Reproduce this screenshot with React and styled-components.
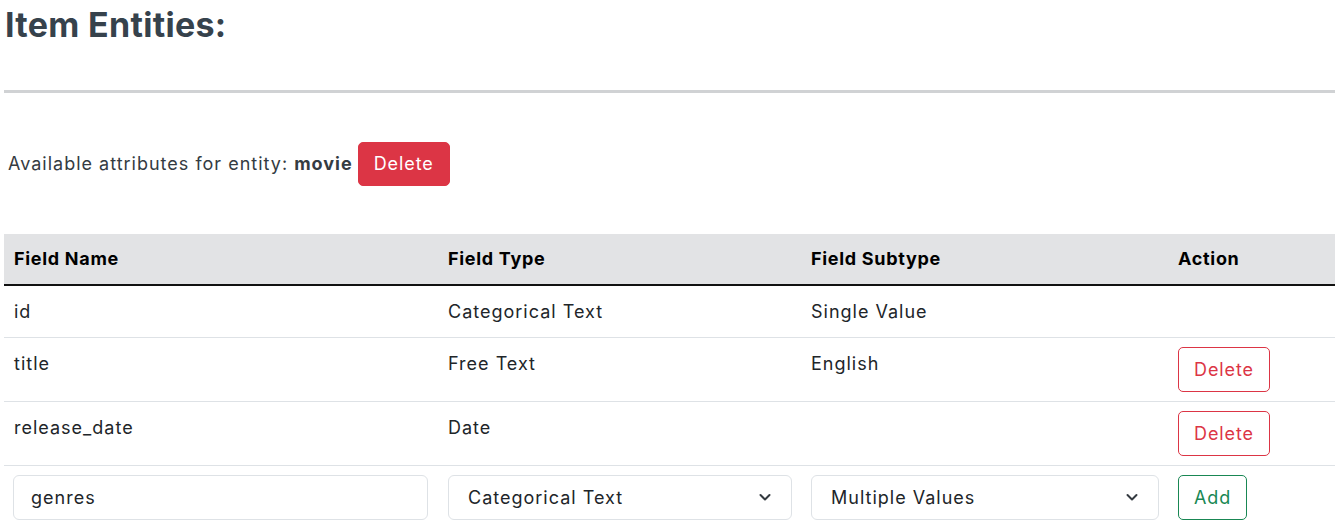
import React from 'react';
import styled, { createGlobalStyle } from 'styled-components';

const GlobalStyle = createGlobalStyle`
  body {
    margin: 0;
    font-family: Inter, "Noto Sans", sans-serif;
    color: #212529;
    background: #fff;
  }
`;

const Page = styled.div`
  padding: 0 5px 0 4px;
`;

const Title = styled.h2`
  margin: 5px 0 0 1px;
  font-size: 34px;
  line-height: 1.2;
  font-weight: 700;
  color: #36424c;
  letter-spacing: 0.3px;
`;

const Divider = styled.hr`
  margin: 44px 0 0;
  border: 0;
  height: 3px;
  background: #d0d2d4;
`;

const AttrLine = styled.div`
  display: flex;
  align-items: center;
  gap: 5px;
  margin-top: 49px;
  padding-left: 4px;
  font-size: 18px;
  letter-spacing: 1px;
  color: #343b42;
`;

const Button = styled.button`
  font-family: inherit;
  font-size: 18px;
  letter-spacing: 0.9px;
  line-height: 27px;
  height: ${(p) => p.$h || 44}px;
  padding: 0 15px;
  border-radius: 5px;
  cursor: pointer;
  border: 1px solid ${(p) => p.$color};
  color: ${(p) => (p.$solid ? '#fff' : p.$color)};
  background: ${(p) => (p.$solid ? p.$color : '#fff')};
`;

const Table = styled.table`
  margin-top: 48px;
  width: 100%;
  border-collapse: collapse;
  font-size: 18px;
  letter-spacing: 1px;
  table-layout: fixed;
`;

const Th = styled.th`
  text-align: left;
  background: #e2e3e5;
  color: #000;
  font-weight: 700;
  letter-spacing: 0.7px;
  line-height: 33px;
  padding: 8px 9px 9px 10px;
  border-bottom: 2px solid #111;
`;

const Td = styled.td`
  vertical-align: top;
  line-height: 33px;
  padding: 9px 9px 9px 10px;
  border-bottom: 1px solid #dee2e6;
`;

const Input = styled.input`
  box-sizing: border-box;
  width: 100%;
  height: 45px;
  font-family: inherit;
  font-size: 18px;
  letter-spacing: 1px;
  color: #212529;
  padding: 0 17px;
  border: 1px solid #dee2e6;
  border-radius: 6px;
  margin-left: -1px;
`;

const SelectBox = styled.div`
  box-sizing: border-box;
  height: 45px;
  display: flex;
  align-items: center;
  justify-content: space-between;
  padding: 0 18px 0 19px;
  border: 1px solid #dee2e6;
  border-radius: 6px;
  color: #212529;
  font-size: 18px;
`;

const Chevron = () => (
  <svg width="16" height="16" viewBox="0 0 16 16" fill="none" stroke="#343a40" strokeWidth="2" strokeLinecap="round" strokeLinejoin="round">
    <path d="m3.5 6 4.5 4.5 4.5-4.5" />
  </svg>
);

const rows = [
  { name: 'id', type: 'Categorical Text', sub: 'Single Value', del: false },
  { name: 'title', type: 'Free Text', sub: 'English', del: true },
  { name: 'release_date', type: 'Date', sub: '', del: true },
];

export default function App() {
  return (
    <Page>
      <GlobalStyle />
      <Title>Item Entities:</Title>
      <Divider />
      <AttrLine>
        <span>
          Available attributes for entity: <b>movie</b>
        </span>
        <Button $solid $color="#dc3545">Delete</Button>
      </AttrLine>
      <Table>
        <colgroup>
          <col style={{ width: 434 }} />
          <col style={{ width: 363 }} />
          <col style={{ width: 367 }} />
          <col style={{ width: 167 }} />
        </colgroup>
        <thead>
          <tr>
            <Th>Field Name</Th>
            <Th>Field Type</Th>
            <Th>Field Subtype</Th>
            <Th>Action</Th>
          </tr>
        </thead>
        <tbody>
          {rows.map((r) => (
            <tr key={r.name}>
              <Td>{r.name}</Td>
              <Td>{r.type}</Td>
              <Td>{r.sub}</Td>
              <Td>{r.del && <Button $color="#dc3545" $h={45}>Delete</Button>}</Td>
            </tr>
          ))}
          <tr>
            <Td><Input defaultValue="genres" /></Td>
            <Td>
              <SelectBox>
                Categorical Text
                <Chevron />
              </SelectBox>
            </Td>
            <Td>
              <SelectBox>
                Multiple Values
                <Chevron />
              </SelectBox>
            </Td>
            <Td><Button $color="#198754" $h={45}>Add</Button></Td>
          </tr>
        </tbody>
      </Table>
    </Page>
  );
}
